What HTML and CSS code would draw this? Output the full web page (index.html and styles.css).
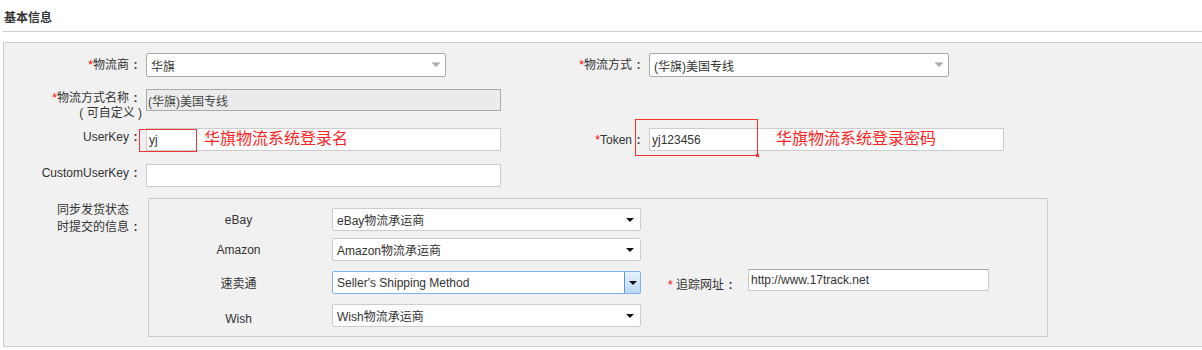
FILE: index.html
```html
<!DOCTYPE html>
<html lang="zh-CN">
<head>
	<meta charset="UTF-8">
	<title>基本信息</title>
	<link rel="stylesheet" href="styles.css">
</head>
<body>
	<div class="wrap">
		<div class="title">基本信息</div>
		<div class="panel">
			<div class="row">
				<label class="lbl"><i>*</i>物流商<span class="cl">:</span></label>
				<div class="fld">
					<div class="sel sel-top"><span class="txt">华旗</span><span class="arr"></span></div>
				</div>
				<label class="lbl lbl-r"><i>*</i>物流方式<span class="cl">:</span></label>
				<div class="fld">
					<div class="sel sel-top"><span class="txt">(华旗)美国专线</span><span class="arr"></span></div>
				</div>
			</div>
			<div class="row row2">
				<label class="lbl lbl-two"><i>*</i>物流方式名称<span class="cl">:</span><br>( 可自定义 )</label>
				<div class="fld">
					<input class="ipt ipt-dis" type="text" value="(华旗)美国专线" disabled>
				</div>
			</div>
			<div class="row row3">
				<label class="lbl lbl-up">UserKey<span class="cl">:</span></label>
				<div class="fld">
					<input class="ipt" type="text" value="yj">
					<span class="mark mark-user"></span>
					<span class="note note-user">华旗物流系统登录名</span>
				</div>
				<label class="lbl lbl-r"><i>*</i>Token<span class="cl">:</span></label>
				<div class="fld">
					<input class="ipt" type="text" value="yj123456">
					<span class="mark mark-token"><b></b></span>
					<span class="note note-token">华旗物流系统登录密码</span>
				</div>
			</div>
			<div class="row row4">
				<label class="lbl lbl-up">CustomUserKey<span class="cl">:</span></label>
				<div class="fld">
					<input class="ipt" type="text" value="">
				</div>
			</div>
			<div class="row row5">
				<div class="lbl lbl-sync"><span>同步发货状态<br>时提交的信息<span class="cl">:</span></span></div>
				<div class="sync">
					<div class="srow">
						<span class="slbl">eBay</span>
						<div class="sel sel-in"><span class="txt">eBay物流承运商</span><span class="arr"></span></div>
					</div>
					<div class="srow srow2">
						<span class="slbl">Amazon</span>
						<div class="sel sel-in"><span class="txt">Amazon物流承运商</span><span class="arr"></span></div>
					</div>
					<div class="srow srow3">
						<span class="slbl">速卖通</span>
						<div class="sel sel-in sel-focus"><span class="txt">Seller's Shipping Method</span><span class="btn"><span class="arr"></span></span></div>
						<label class="tlbl"><i>*</i> 追踪网址<span class="cl">:</span></label>
						<input class="ipt ipt-track" type="text" value="http://www.17track.net">
					</div>
					<div class="srow srow3">
						<span class="slbl slbl-low">Wish</span>
						<div class="sel sel-in"><span class="txt">Wish物流承运商</span><span class="arr"></span></div>
					</div>
				</div>
			</div>
		</div>
	</div>
</body>
</html>
```

FILE: styles.css
```css
body{margin:0;padding:0;background:#fff;font-family:"Liberation Sans","Noto Sans CJK SC",sans-serif;font-size:12px;color:#333;}
.wrap{padding-left:3px;}
.title{font-weight:bold;line-height:16px;padding:10px 0 5px 1px;border-bottom:1px solid #ccc;}
.panel{margin-top:10px;border:1px solid #ccc;border-right:none;background:#f1f1f1;padding:10px 0 9px 0;}

.row{display:flex;align-items:flex-start;}
.row2{margin-top:12px;}
.row3{margin-top:7px;}
.row4{margin-top:13px;}
.row5{margin-top:11px;}

.lbl{width:138px;margin-right:4px;text-align:right;line-height:16px;padding-top:4px;flex:none;}
.lbl i,.tlbl i{font-style:normal;color:#f00;}
.cl{display:inline-block;width:13px;text-align:center;font-weight:bold;}
.lbl-r{width:140px;}
.lbl-up{padding-top:1px;}
.lbl-two{line-height:15px;padding-top:2px;}
.lbl-sync{line-height:17px;padding-top:4px;}
.lbl-sync>span{display:inline-block;text-align:left;}

.fld{width:355px;margin-right:4px;position:relative;flex:none;}

.ipt{box-sizing:border-box;display:block;width:355px;height:23px;margin:0;padding:0 2px;border:1px solid #ccc;background:#fff;font-family:inherit;font-size:12px;color:#333;outline:none;}
.ipt-dis{height:22px;padding:0 1px;border-color:#aaa;background:#ebebeb;color:#444;}

.sel{box-sizing:border-box;display:flex;align-items:center;height:24px;background:#fff;border:1px solid #aaa;border-radius:2px;}
.sel .txt{flex:1;padding-left:4px;white-space:nowrap;}
.sel-top{width:300px;}
.sel-top .arr{width:0;height:0;border-left:4px solid transparent;border-right:4px solid transparent;border-top:4px solid #aaa;margin-right:5px;box-shadow:0 -1px 0 #ccc;}

.sync{box-sizing:border-box;width:900px;margin-left:2px;border:1px solid #ccc;padding:9px 0;}
.srow{display:flex;align-items:center;height:23px;}
.srow2{margin-top:7px;}
.srow3{margin-top:10px;}
.slbl{width:179px;text-align:center;flex:none;}
.slbl-low{position:relative;top:3px;}
.sel-in{width:309px;height:23px;margin-left:4px;border-color:#ccc;border-radius:2px;flex:none;}
.sel-in .arr{width:0;height:0;border-left:4px solid transparent;border-right:4px solid transparent;border-top:4px solid #111;margin-right:6px;}
.sel-focus{border-color:#7eb4ea;}
.sel-focus .btn{display:flex;align-items:center;justify-content:center;width:15px;height:21px;border-left:1px solid #5b9bd5;background:linear-gradient(#e6f2fd,#b9d9f6);}
.sel-focus .btn .arr{margin:0;}

.tlbl{margin-left:27px;width:67px;flex:none;position:relative;top:1px;white-space:nowrap;}
.ipt-track{width:241px;height:22px;margin-left:13px;align-self:flex-start;margin-top:-2px;border-color:#ccc;border-top-color:#aaa;}

.mark{position:absolute;border:1px solid #e33;box-sizing:border-box;}
.mark-user{left:-7px;top:1px;width:58px;height:23px;}
.mark-token{left:-14px;top:-9px;width:123px;height:37px;}
.mark-token b{position:absolute;right:-2px;bottom:-2px;width:3px;height:3px;background:#e33;}
.note{position:absolute;top:0;font-size:16px;line-height:22px;color:#f22;white-space:nowrap;}
.note-user{left:58px;}
.note-token{left:127px;}
```
